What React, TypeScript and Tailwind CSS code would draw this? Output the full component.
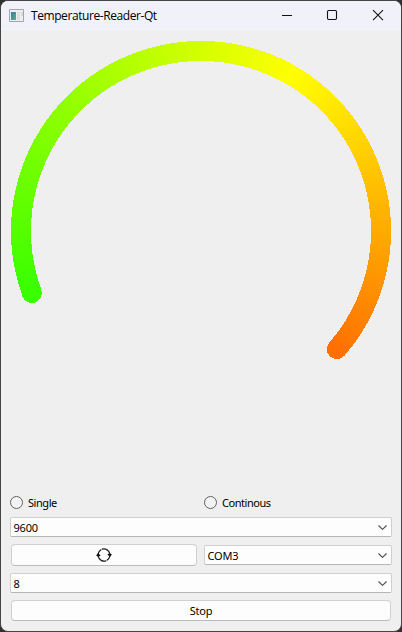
import React from "react";

const CX = 201;
const CY = 231;
const R = 180;
const START = 200;
const END = -41;
const STEP = 0.5;

const point = (deg: number) => {
  const a = (deg * Math.PI) / 180;
  return [CX + R * Math.cos(a), CY - R * Math.sin(a)];
};

// Conical ramp: green at 240 degrees, yellow at 60, red at -120.
const colorAt = (deg: number) => {
  const v = Math.round(255 * (1 - Math.abs(deg - 60) / 180));
  return deg > 60 ? `rgb(${v},255,0)` : `rgb(255,${v},0)`;
};

function Gauge() {
  const segments: React.ReactNode[] = [];
  for (let d = START; d > END; d -= STEP) {
    const [x1, y1] = point(d);
    const [x2, y2] = point(Math.max(END, d - STEP * 1.6));
    segments.push(
      <path key={d} d={`M${x1} ${y1}A${R} ${R} 0 0 1 ${x2} ${y2}`} stroke={colorAt(d)} strokeWidth="20" fill="none" />
    );
  }
  const [sx, sy] = point(START);
  const [ex, ey] = point(END);
  return (
    <svg className="block h-[461px] w-[400px] shrink-0" viewBox="1 31 400 461" shapeRendering="crispEdges">
      <circle cx={sx} cy={sy + 0.5} r="10" fill={colorAt(START)} />
      <circle cx={ex} cy={ey} r="10" fill={colorAt(END)} />
      {segments}
    </svg>
  );
}

function Radio({ label, spacing }: { label: string; spacing: string }) {
  return (
    <label className="flex h-5 flex-1 items-center gap-[5px]">
      <span className="size-[13px] rounded-full border border-[#626262] bg-[#f3f3f3]" />
      <span className={`translate-y-px ${spacing}`}>{label}</span>
    </label>
  );
}

function Combo({ value, className = "" }: { value: string; className?: string }) {
  return (
    <div className={`flex h-5 items-center justify-between rounded-[2px] border border-[#d0d0d0] border-b-[#b5b5b5] bg-[#fdfdfd] pr-1 pl-[2.5px] ${className}`}>
      <span className="translate-y-px tracking-[-0.2px]">{value}</span>
      <svg className="h-[5px] w-[9px]" viewBox="0 0 9 5" fill="none" stroke="#505050" strokeWidth="1.1">
        <path d="M.5 .5 4.5 4.4 8.5 .5" />
      </svg>
    </div>
  );
}

function TitleBar() {
  return (
    <header className="flex h-[30px] shrink-0 items-center bg-[#f1f2f9] pl-2">
      <svg className="h-[13px] w-[15px] -translate-y-px" viewBox="0 0 15 13">
        <defs>
          <linearGradient id="pane" x1="0" y1="0" x2="1" y2="1">
            <stop stopColor="#397aa9" />
            <stop offset="1" stopColor="#62ad83" />
          </linearGradient>
        </defs>
        <path d="M.5 .5h14v12H.5z" fill="#eef0f0" stroke="#a2a6aa" />
        <path d="M2 3h5v8H2z" fill="url(#pane)" />
        <path d="M8 3h3v8H8z" fill="#dce0e0" />
        <path d="M12 3h2v4h-2z" fill="#d0ddd5" />
      </svg>
      <h1 className="ml-[7px] font-['Open_Sans','Noto_Sans',sans-serif] text-[12px] leading-4 tracking-[-0.42px] text-black">
        Temperature-Reader-Qt
      </h1>
      <svg className="mr-[17px] ml-auto h-[12px] w-[103px] -translate-y-px" viewBox="281 9 103 12" fill="none" stroke="#111">
        <path d="M282 15.5h10" shapeRendering="crispEdges" />
        <rect x="327.5" y="10.5" width="9" height="9" rx="1.2" strokeWidth="1.1" />
        <path d="m373 10.2 10 10m0-10-10 10" strokeWidth="1.1" />
      </svg>
    </header>
  );
}

export default function App() {
  return (
    <div className="h-[632px] w-[402px] overflow-hidden bg-[#303033] font-['Noto_Sans','Open_Sans',sans-serif] text-[11px] leading-[14px] text-black">
      <div className="flex h-full flex-col overflow-hidden rounded-lg border border-[#454548] bg-[#efefef]">
        <TitleBar />
        <Gauge />
        <main className="flex flex-col px-[9px]">
          <div className="flex gap-[6px]">
            <Radio label="Single" spacing="tracking-[-0.45px]" />
            <Radio label="Continous" spacing="tracking-[-0.45px]" />
          </div>
          <Combo value="9600" className="mt-[5px]" />
          <div className="mt-[7px] flex items-center">
            <button className="ml-px flex h-[22px] w-[186px] items-center justify-center rounded-[4px] border border-[#d0d0d0] border-b-[#bbb] bg-[#fdfdfd]">
              <svg className="h-[14px] w-4" viewBox="0 0 16 14" fill="none" stroke="#1c1c1c" strokeWidth="1.25">
                <path d="M2.1 6C2.5 3.9 3.6 2.4 5.3 1.5M5.9 1.2C9.3 0 13 2 13.9 5.8M13.9 8c-.4 2.1-1.5 3.6-3.2 4.5M10.1 12.8C6.7 14 3 12 2.1 8.2" />
                <path d="M.1 7.4 2.1 5.1l2.6 2.7-2.5.9zM11.3 6.2l2.5-.9 2.1 1.3-2 2.3z" fill="#111" stroke="none" />
              </svg>
            </button>
            <Combo value="COM3" className="ml-[7px] flex-1" />
          </div>
          <Combo value="8" className="mt-[7px]" />
          <button className="mx-px mt-[7px] h-[21px] rounded-[4px] border border-[#d0d0d0] border-b-[#bbb] bg-[#fdfdfd] text-center">
            <span className="inline-block tracking-[-0.25px]">Stop</span>
          </button>
        </main>
      </div>
    </div>
  );
}
